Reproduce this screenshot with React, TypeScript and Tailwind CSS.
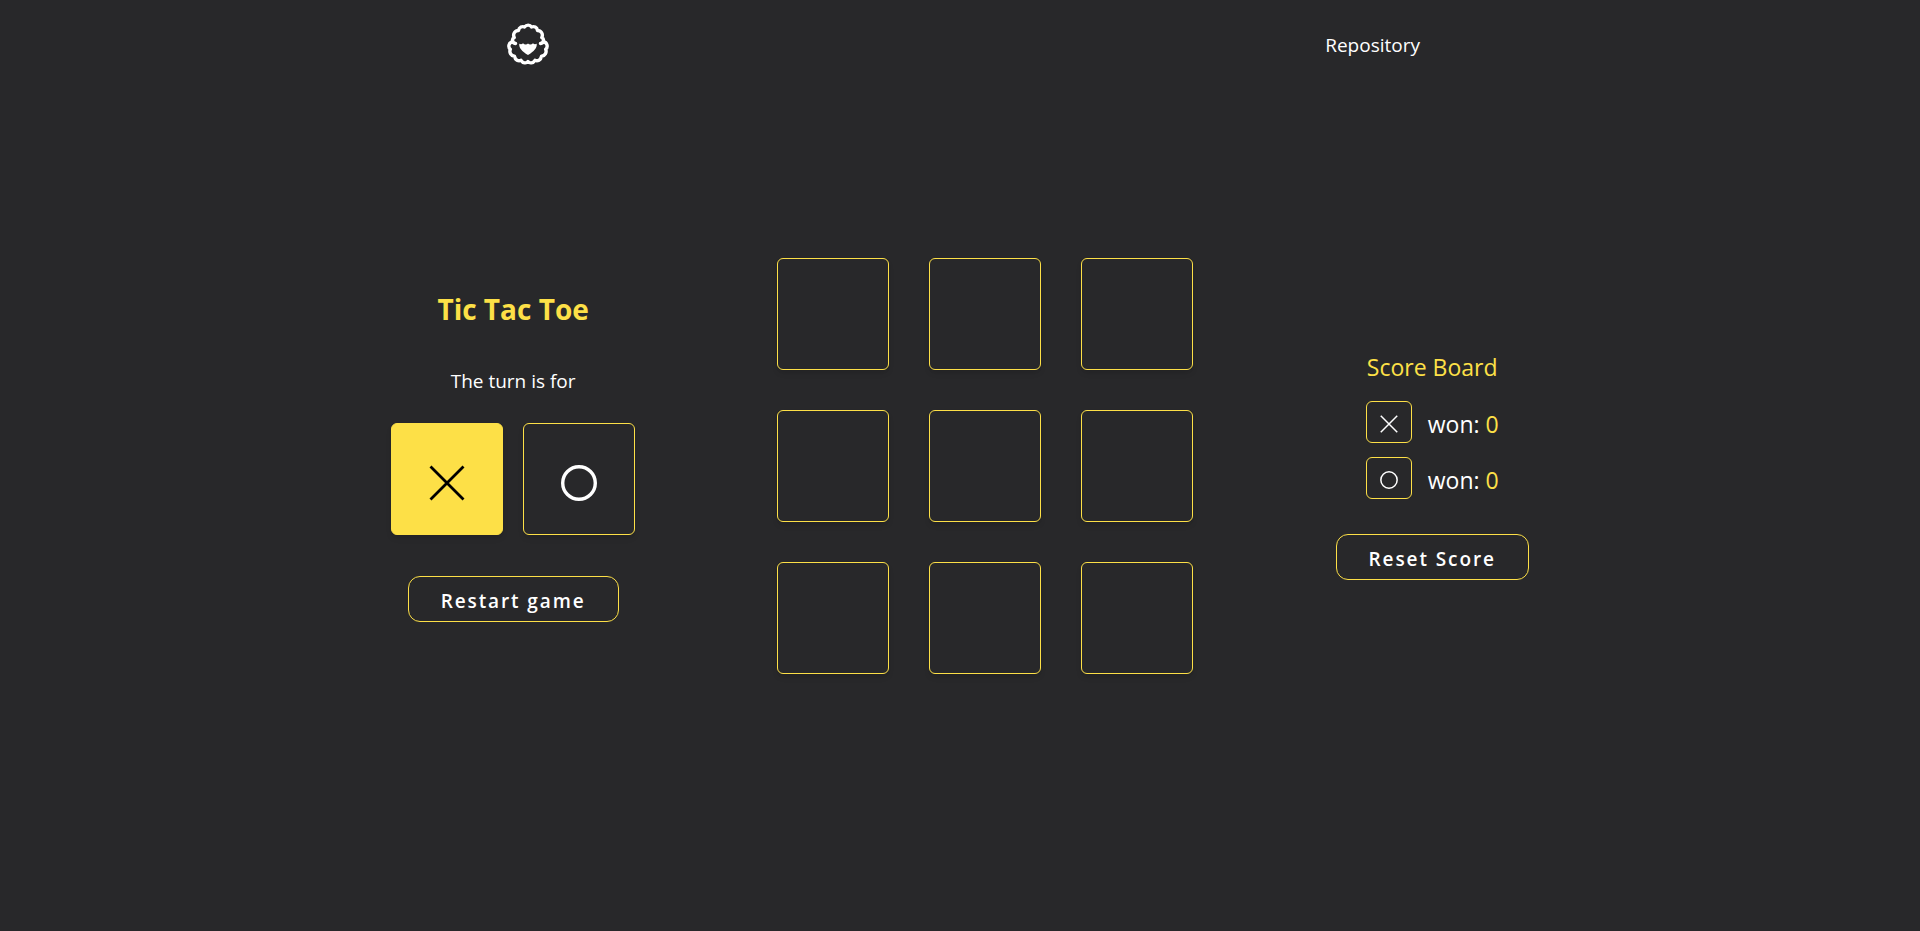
import { useState } from "react";

type Player = "x" | "o";

function Logo() {
  return (
    <svg viewBox="0 0 56 56" className="size-14" fill="none" aria-hidden="true">
      <path
        d="M15.500 26.500 C12 26 11.500 22 14.200 20.500 C12.500 17 15 13.500 18.500 13.500 C19 10 22.500 9 24.500 10 C26.500 7.500 30 7.500 31.500 10 C34 9 37 10 37.500 13.500 C41 13.500 43.500 17 41.800 20.500 C44.500 22 44 26 40.500 26.500 M13 24.500 C8.500 25.500 7.800 30 10.300 32.300 C9 35.500 11 39 14.500 39.300 C15 43 18.500 44.500 21 43.300 C23 46.500 26.500 46.500 28 44.500 C29.500 46.500 33 46.500 35 43.300 C37.500 44.500 41 43 41.500 39.300 C45 39 47 35.500 45.700 32.300 C48.200 30 47.500 25.500 43 24.500"
        stroke="currentColor"
        strokeWidth="3.4"
        strokeLinecap="round"
        strokeLinejoin="round"
      />
      <path
        d="M19.300 26.800 C20.800 27.500 22 27.300 23 26.300 C24.500 28 26.800 28 28 26.500 C29.200 28 31.500 28 33 26.300 C34 27.300 35.200 27.500 36.700 26.800 C37.300 31 34 34.500 28 38 C22 34.500 18.700 31 19.300 26.800 Z"
        fill="currentColor"
      />
    </svg>
  );
}

function Mark({ player, className, stroke }: { player: Player; className: string; stroke: number }) {
  return (
    <svg viewBox="0 0 36 36" className={className} fill="none" stroke="currentColor" strokeWidth={stroke} aria-hidden="true">
      {player === "x" ? <path d="M1.500 1.500 L34.500 34.500 M34.500 1.500 L1.500 34.500" /> : <circle cx="18" cy="18" r="16.300" />}
    </svg>
  );
}

function TurnTile({ player, active }: { player: Player; active: boolean }) {
  return (
    <div
      className={`flex size-28 items-center justify-center rounded-md border border-[#fde047] pt-2 shadow-md ${
        active ? "bg-[#fde047] text-black" : "text-white"
      }`}
    >
      <Mark player={player} className="size-9" stroke={player === "x" ? 2.8 : 3.4} />
    </div>
  );
}

function OutlineButton({ children, onClick }: { children: string; onClick: () => void }) {
  return (
    <button
      type="button"
      onClick={onClick}
      className="h-[46px] cursor-pointer rounded-xl border border-[#fde047] px-8 pt-1 text-[19px] font-semibold tracking-widest"
    >
      {children}
    </button>
  );
}

function ScoreRow({ player, score }: { player: Player; score: number }) {
  return (
    <div className="flex items-center gap-4 text-[23px]">
      <span className="flex h-[42px] w-[46px] items-center justify-center rounded-md border border-[#fde047] pt-1">
        <Mark player={player} className="size-[18px]" stroke={3} />
      </span>
      <p className="pt-1">
        won: <span className="text-[#fde047]">{score}</span>
      </p>
    </div>
  );
}

export default function App() {
  const [cells, setCells] = useState<(Player | null)[]>(Array(9).fill(null));
  const [turn, setTurn] = useState<Player>("x");
  const [scores, setScores] = useState({ x: 0, o: 0 });

  const play = (index: number) => {
    if (cells[index]) return;
    setCells(cells.map((cell, i) => (i === index ? turn : cell)));
    setTurn(turn === "x" ? "o" : "x");
  };

  const restart = () => {
    setCells(Array(9).fill(null));
    setTurn("x");
  };

  return (
    <div className="grid min-h-screen grid-rows-[90px_1fr_90px] bg-[#28282a] font-['Open_Sans','Noto_Sans',sans-serif] text-white">
      <header className="mx-auto flex w-full max-w-[920px] items-center justify-between">
        <a href="#" aria-label="Home">
          <Logo />
        </a>
        <a href="#repository" className="text-[19px]">
          Repository
        </a>
      </header>
      <main className="mx-auto flex w-full max-w-7xl items-center justify-around">
        <section className="flex flex-col items-center pb-5">
          <h1 className="text-[28px] leading-10 font-bold text-[#fde047]">Tic Tac Toe</h1>
          <p className="mt-[38px] text-[19px] leading-7">The turn is for</p>
          <div className="mt-7 mb-[41px] flex gap-5">
            <TurnTile player="x" active={turn === "x"} />
            <TurnTile player="o" active={turn === "o"} />
          </div>
          <OutlineButton onClick={restart}>Restart game</OutlineButton>
        </section>
        <section className="grid grid-cols-3 gap-10" aria-label="Board">
          {cells.map((cell, index) => (
            <button
              key={index}
              type="button"
              aria-label={`Cell ${index + 1}`}
              onClick={() => play(index)}
              className="flex size-28 cursor-pointer items-center justify-center rounded-md border border-[#fde047] shadow-md"
            >
              {cell && <Mark player={cell} className="size-9" stroke={2.5} />}
            </button>
          ))}
        </section>
        <section className="flex flex-col items-center">
          <h2 className="mb-[18px] text-[23px] leading-8 text-[#fde047]">Score Board</h2>
          <div className="mb-[35px] flex flex-col gap-[14px]">
            <ScoreRow player="x" score={scores.x} />
            <ScoreRow player="o" score={scores.o} />
          </div>
          <OutlineButton onClick={() => setScores({ x: 0, o: 0 })}>Reset Score</OutlineButton>
        </section>
      </main>
    </div>
  );
}
